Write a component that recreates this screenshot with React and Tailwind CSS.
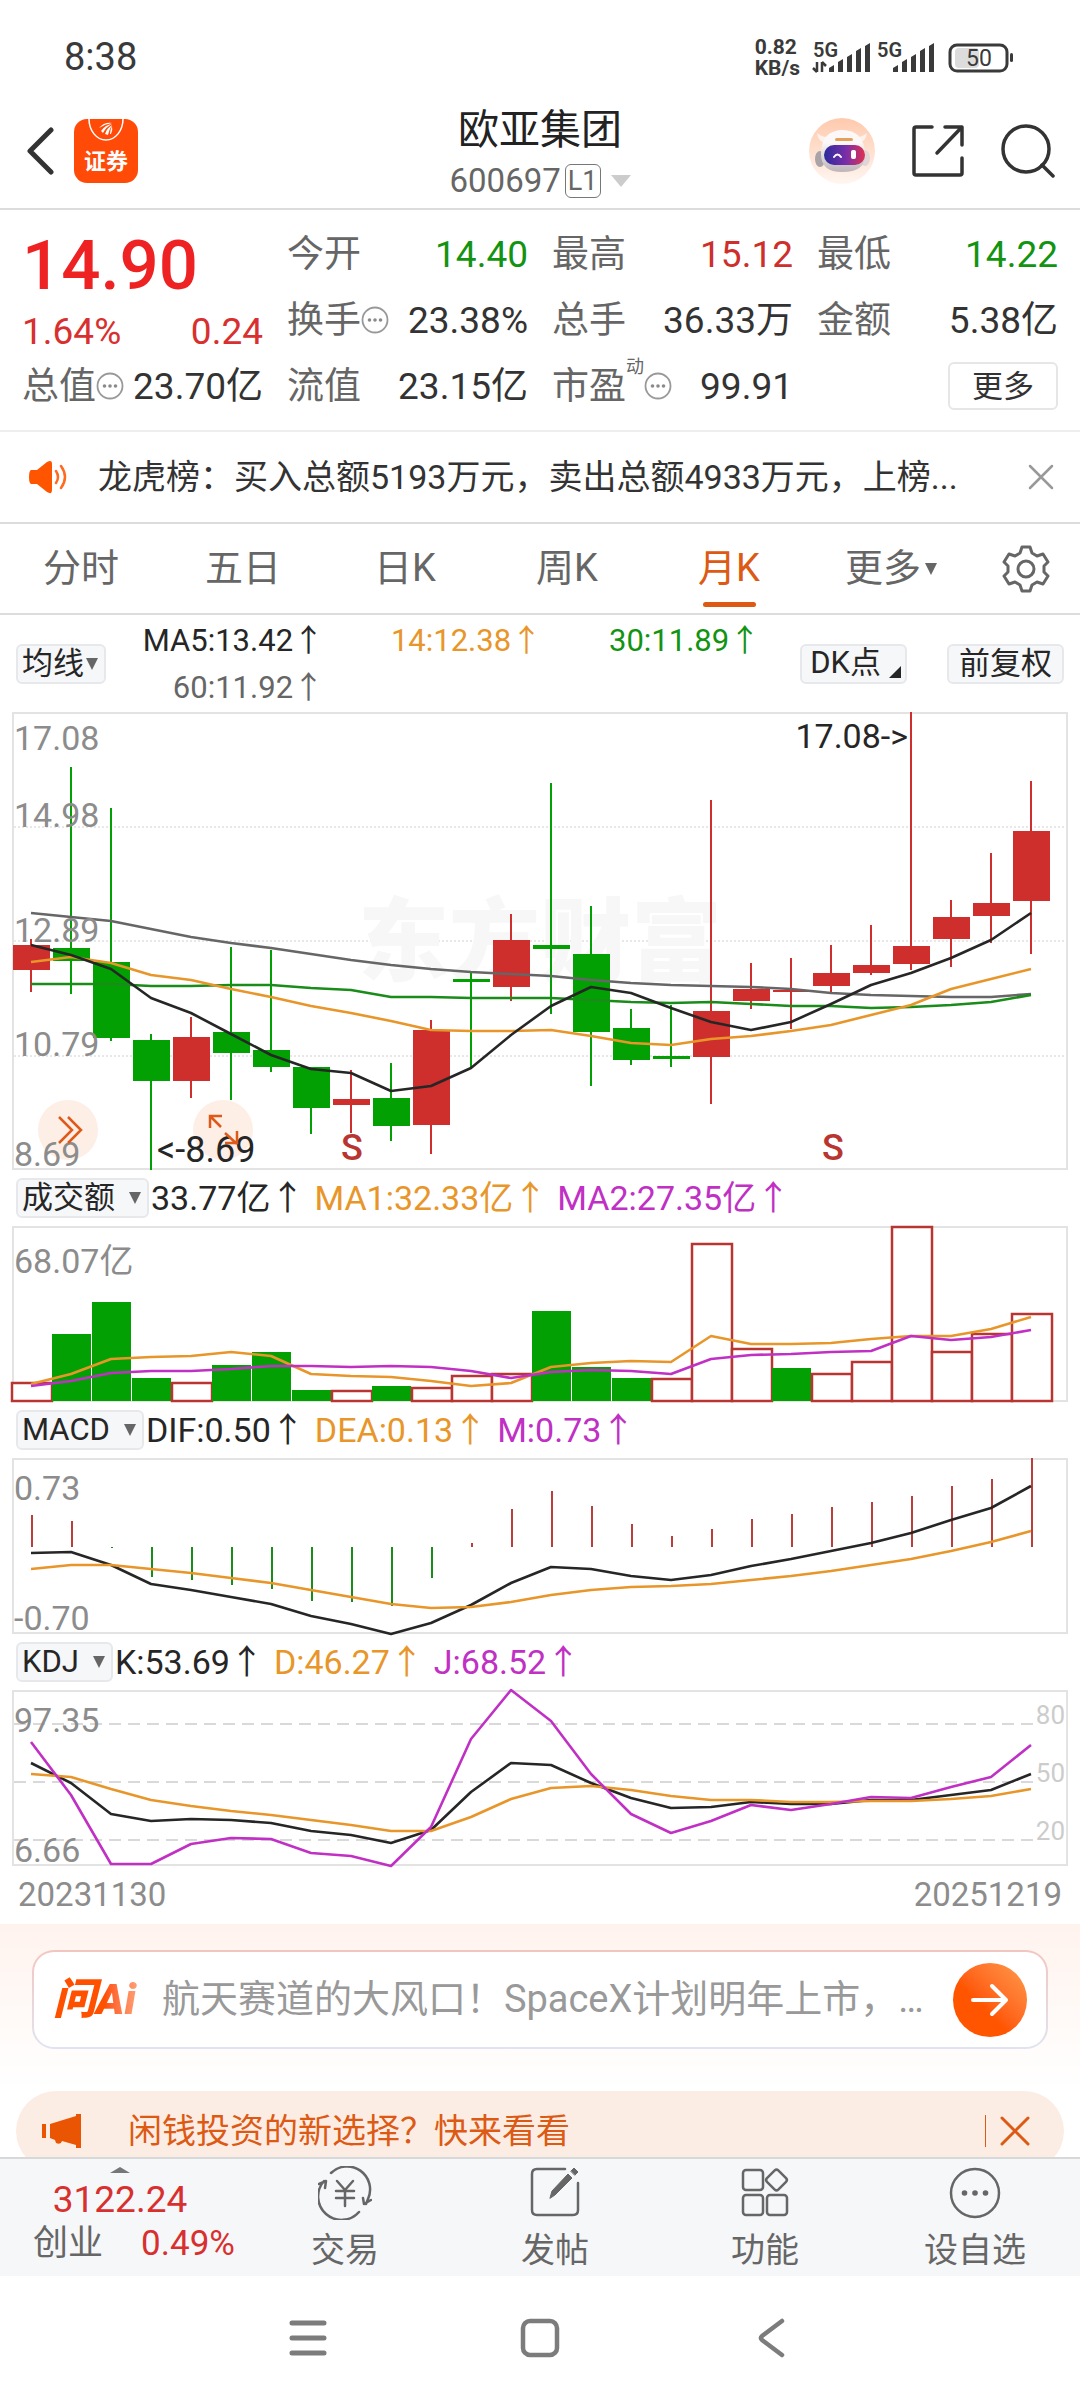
import { useState } from 'react';

const RED = '#ce2e2c';
const GREEN = '#02a002';
const ORANGE = '#e8962a';
const PURPLE = '#c030c4';
const BLACK = '#262626';
const STEP = 40;
const cx = (i) => 19 + STEP * i;
const toPoints = (ys) => ys.map((y, i) => `${cx(i)},${y}`).join(' ');

// [up, high, top, bottom, low]
const candles = [
  [1, 227, 233, 258, 280], [0, 55, 236, 249, 282], [0, 96, 250, 326, 329], [0, 322, 328, 369, 458],
  [1, 305, 325, 369, 386], [0, 235, 320, 341, 388], [0, 238, 338, 355, 360], [0, 355, 355, 396, 422],
  [1, 358, 387, 393, 421], [0, 351, 386, 414, 429], [1, 308, 318, 413, 442], [0, 261, 267, 270, 356],
  [1, 202, 228, 275, 289], [0, 71, 233, 237, 302], [0, 194, 242, 320, 374], [0, 297, 316, 348, 353],
  [0, 293, 344, 347, 355], [1, 88, 299, 345, 392], [1, 251, 277, 289, 297], [1, 246, 278, 280, 317],
  [1, 233, 261, 274, 282], [1, 213, 253, 261, 263], [1, 0, 234, 252, 258], [1, 188, 205, 227, 255],
  [1, 141, 191, 204, 231], [1, 69, 119, 189, 242],
];
const ma5 = [233, 243, 257, 286, 301, 322, 343, 357, 361, 379, 374, 356, 323, 294, 275, 281, 296, 310, 318, 310, 292, 273, 261, 246, 228, 201];
const ma14 = [250, 245, 251, 263, 268, 277, 285, 294, 301, 309, 318, 319, 319, 318, 324, 331, 333, 327, 324, 319, 313, 303, 293, 277, 267, 257];
const ma30 = [272, 272, 272, 274, 274, 273, 273, 276, 278, 285, 285, 286, 286, 286, 288, 290, 291, 290, 292, 294, 294, 296, 295, 293, 290, 283];
const ma60 = [201, 205, 209, 217, 225, 231, 236, 242, 248, 253, 257, 260, 262, 264, 268, 271, 273, 274, 275, 277, 281, 283, 284, 285, 285, 282];

const volumes = [
  [1, 157], [0, 108], [0, 76], [0, 152], [1, 157], [0, 139], [0, 126], [0, 164], [1, 165], [0, 160], [1, 162], [1, 150], [1, 148],
  [0, 85], [0, 141], [0, 152], [1, 153], [1, 18], [1, 123], [0, 142], [1, 148], [1, 136], [1, 1], [1, 126], [1, 108], [1, 88],
];
const volMa1 = [158, 148, 133, 131, 130, 126, 130, 148, 150, 151, 155, 160, 157, 141, 137, 135, 136, 110, 118, 118, 117, 113, 110, 110, 103, 91];
const volMa2 = [160, 155, 147, 145, 145, 143, 140, 140, 141, 140, 141, 145, 152, 146, 144, 145, 148, 133, 129, 128, 126, 125, 110, 114, 111, 104];

const macd = [57, 63, 90, 119, 122, 127, 131, 143, 144, 148, 120, 85, 51, 33, 48, 66, 78, 71, 61, 56, 49, 44, 38, 28, 21, 0];
const dif = [95, 94, 107, 126, 132, 139, 146, 158, 166, 176, 165, 147, 125, 109, 111, 118, 122, 117, 108, 101, 93, 85, 75, 62, 50, 28];
const dea = [111, 107, 107, 111, 115, 120, 125, 132, 139, 146, 150, 149, 144, 137, 132, 129, 128, 126, 122, 118, 113, 107, 101, 93, 84, 73];

const kLine = [73, 93, 124, 131, 129, 130, 133, 141, 145, 153, 140, 102, 73, 75, 93, 108, 118, 117, 112, 114, 114, 110, 110, 105, 100, 84];
const dLine = [84, 87, 99, 110, 116, 121, 125, 130, 135, 141, 141, 127, 109, 98, 96, 100, 106, 110, 110, 112, 112, 111, 111, 109, 106, 99];
const jLine = [52, 105, 174, 174, 154, 148, 149, 163, 166, 176, 137, 49, 0, 31, 84, 124, 143, 131, 115, 120, 114, 107, 108, 97, 87, 55];

function Line({ ys, color }) {
  return <polyline points={toPoints(ys)} fill="none" stroke={color} strokeWidth="2.6" strokeLinejoin="round" />;
}

function Frame({ height, label, children }) {
  return (
    <svg viewBox={`0 0 1056 ${height}`} className="block w-full overflow-visible" role="img" aria-label={label}>
      <rect x="1" y="1" width="1054" height={height - 2} fill="none" stroke="#e3e3e3" strokeWidth="2" />
      {children}
    </svg>
  );
}

function AxisText({ y, children }) {
  return <text x="2" y={y} fontSize="34" fill="#8c8c8c">{children}</text>;
}

function PriceChart() {
  return (
    <Frame height={458} label="月K">
      {[115, 229, 344].map((y) => <line key={y} x1="2" x2="1054" y1={y} y2={y} stroke="#d0d0d0" strokeDasharray="2 2" />)}
      <text x="346" y="262" fontSize="91" fontWeight="900" fill="#f7f7f7">东方财富</text>
      {candles.map(([up, high, top, bottom, low], i) => (
        <g key={i} fill={up ? RED : GREEN}>
          <rect x={cx(i) - 1} y={high} width="2" height={low - high} />
          <rect x={cx(i) - 18} y={top} width="37" height={bottom - top} />
        </g>
      ))}
      <Line ys={ma60} color="#666" />
      <Line ys={ma30} color="#1a8c1a" />
      <Line ys={ma14} color={ORANGE} />
      <Line ys={ma5} color={BLACK} />
      <circle cx="56" cy="418" r="30" fill="#fdeae0" fillOpacity="0.8" />
      <circle cx="211" cy="418" r="30" fill="#fdeae0" fillOpacity="0.8" />
      <AxisText y="38">17.08</AxisText>
      <AxisText y="115">14.98</AxisText>
      <AxisText y="230">12.89</AxisText>
      <AxisText y="344">10.79</AxisText>
      <AxisText y="454">8.69</AxisText>
      <path d="M47 405l13 13-13 13M56 405l13 13-13 13" fill="none" stroke="#de5a1a" strokeWidth="2.5" />
      <text x="145" y="450" fontSize="36" fill={BLACK}>&lt;-8.69</text>
      <path d="M198 416v-12h12M198 404l11 11M213 421l12 11M225 419v12h-12" fill="none" stroke="#de5a1a" strokeWidth="2.5" />
      <text x="896" y="36" fontSize="34" fill={BLACK} textAnchor="end">17.08-&gt;</text>
      <text x="340" y="448" fontSize="36" fontWeight="500" fill="#b93532" textAnchor="middle">S</text>
      <text x="821" y="448" fontSize="36" fontWeight="500" fill="#b93532" textAnchor="middle">S</text>
    </Frame>
  );
}

function VolumeChart() {
  return (
    <Frame height={176} label="成交额">
      {volumes.map(([up, top], i) => up
        ? <rect key={i} x={cx(i) - 19} y={top} width="40" height={175 - top} fill="#fff" stroke="#b93532" strokeWidth="2.5" />
        : <rect key={i} x={cx(i) - 19} y={top} width="39" height={175 - top} fill={GREEN} />)}
      <Line ys={volMa1} color={ORANGE} />
      <Line ys={volMa2} color={PURPLE} />
      <AxisText y="47">68.07亿</AxisText>
    </Frame>
  );
}

function MacdChart() {
  return (
    <Frame height={176} label="MACD">
      {macd.map((y, i) => <line key={i} x1={cx(i) + 1} x2={cx(i) + 1} y1="89" y2={y} stroke={y < 89 ? '#b93f3c' : '#1a8c1a'} strokeWidth="2" />)}
      <Line ys={dif} color={BLACK} />
      <Line ys={dea} color={ORANGE} />
      <AxisText y="42">0.73</AxisText>
      <AxisText y="172">-0.70</AxisText>
    </Frame>
  );
}

function KdjChart() {
  return (
    <Frame height={176} label="KDJ">
      {[[80, 34], [50, 92], [20, 150]].map(([n, y]) => (
        <g key={n}>
          <line x1="2" x2="1022" y1={y} y2={y} stroke="#d9d9d9" strokeWidth="2" strokeDasharray="12 7" />
          <text x="1053" y={y} fontSize="26" fill="#ccc" textAnchor="end">{n}</text>
        </g>
      ))}
      <Line ys={kLine} color={BLACK} />
      <Line ys={dLine} color={ORANGE} />
      <Line ys={jLine} color={PURPLE} />
      <AxisText y="42">97.35</AxisText>
      <AxisText y="172">6.66</AxisText>
    </Frame>
  );
}

function Picker({ label, options, tight }) {
  return (
    <span className="relative inline-flex shrink-0">
      <select aria-label={label} className={`field-sizing-content appearance-none h-10 rounded-md border-2 border-[#e6e8ec] bg-[#f6f7f9] pl-1 text-[31px] leading-9 text-[#262626] outline-none ${tight ? 'pr-5' : 'pr-8'}`}>
        {options.map((o) => <option key={o}>{o}</option>)}
      </select>
      <svg viewBox="0 0 12 12" className="pointer-events-none absolute right-2 top-3.5 size-3" fill="#666"><path d="M0 0h12L6 12z" /></svg>
    </span>
  );
}

function IndicatorBar({ label, options, values }) {
  return (
    <div className="flex h-14 items-center px-4 text-[34px] whitespace-nowrap">
      <Picker label={label} options={options} />
      <div className="flex gap-2.5 pl-0.5">
        {values.map(([text, cls]) => <span key={text} className={cls}>{text}</span>)}
      </div>
    </div>
  );
}

function InfoDots() {
  return (
    <svg viewBox="0 0 28 28" className="size-7 shrink-0" fill="none" stroke="#999" strokeWidth="1.8">
      <circle cx="14" cy="14" r="12.5" />
      <g fill="#8a8a8a" stroke="none"><circle cx="8.5" cy="14" r="1.8" /><circle cx="14" cy="14" r="1.8" /><circle cx="19.5" cy="14" r="1.8" /></g>
    </svg>
  );
}

function Stat({ label, value, color = 'text-[#333]', sup, info }) {
  return (
    <div className="flex h-[66px] items-center">
      <span className="text-[#666]">{label}</span>
      {sup && <span className="self-start text-lg text-[#666]">{sup}</span>}
      {info && <InfoDots />}
      <span className={`ml-auto ${color}`}>{value}</span>
    </div>
  );
}

function Signal({ arrows }) {
  return (
    <svg viewBox="0 0 60 32" className="h-8 w-[60px] overflow-visible" fill="#3a3a3a">
      <text x="1" y="15" fontSize="20" fontWeight="600">5G</text>
      {arrows && <path d="M5 20v10M5 30l-4-4M10 30V20M10 20l4 4" fill="none" stroke="#3a3a3a" strokeWidth="2.5" />}
      <path d="M17 30v-4l5-3v7zM26 30V20l5-3v13zM35 30V15l5-3v18zM44 30V9l5-3v24zM53 30V4l5-3v29z" />
    </svg>
  );
}

function StatusBar() {
  return (
    <div className="flex h-[93px] shrink-0 items-center justify-between pt-[22px] pr-16 pl-16 text-[#3a3a3a]">
      <span className="text-[38px]">8:38</span>
      <div className="flex items-center gap-1">
        <div className="mr-2 text-[21px] leading-[21px] font-bold">
          <div>0.82</div>
          <div>KB/s</div>
        </div>
        <Signal arrows />
        <Signal />
        <svg viewBox="0 0 68 30" className="ml-2 h-[30px] w-[68px]">
          <rect x="7" y="5" width="24" height="20" rx="4" fill="#dcdcdc" />
          <rect x="2" y="2" width="57" height="26" rx="7" fill="none" stroke="#3a3a3a" strokeWidth="3" />
          <rect x="62" y="10" width="3" height="9" rx="1.5" fill="#3a3a3a" />
          <text x="31" y="23" fontSize="23" fill="#3a3a3a" textAnchor="middle">50</text>
        </svg>
      </div>
    </div>
  );
}

function Robot() {
  return (
    <svg viewBox="0 0 66 66" className="size-[66px]">
      <defs>
        <linearGradient id="halo" x1="0" y1="0" x2="0" y2="1"><stop offset="0" stopColor="#ffc9ac" /><stop offset="1" stopColor="#fff6f1" /></linearGradient>
        <linearGradient id="visor" x1="0" y1="0" x2="1" y2="0"><stop offset="0" stopColor="#2b2a9c" /><stop offset="0.55" stopColor="#7b2fa8" /><stop offset="1" stopColor="#e0304f" /></linearGradient>
        <linearGradient id="shell" x1="0" y1="0" x2="0" y2="1"><stop offset="0.3" stopColor="#fcf8f7" /><stop offset="1" stopColor="#bdb5b8" /></linearGradient>
      </defs>
      <circle cx="33" cy="33" r="33" fill="url(#halo)" />
      <path d="M8 15q1 9 10 11l6-8q-9 3-16-3zM58 15q-1 9-10 11l-6-8q9 3 16-3z" fill="#fdf1ec" />
      <ellipse cx="11" cy="41" rx="5" ry="8" fill="#aaa3a8" />
      <ellipse cx="56" cy="40" rx="5" ry="8" fill="#e0d6d8" />
      <path d="M12 36q0-23 21-24 22 0 23 24 1 18-23 18-21 0-21-18z" fill="url(#shell)" />
      <rect x="26" y="20" width="18" height="3" rx="1.5" fill="#e5a05c" />
      <rect x="15" y="27" width="41" height="20" rx="10" fill="url(#visor)" />
      <path d="M25 39q3.5-5 7 0" fill="none" stroke="#fff" strokeWidth="2" strokeLinecap="round" />
      <rect x="42" y="32" width="5" height="9" rx="2" fill="#fff" />
    </svg>
  );
}

function Header() {
  return (
    <header className="grid h-[117px] shrink-0 grid-cols-[1fr_auto_1fr] items-center border-b-2 border-[#dcdcdc]">
      <div className="flex items-center gap-5 pl-[26px]">
        <button type="button" aria-label="返回">
          <svg viewBox="0 0 28 48" className="h-12 w-7" fill="none" stroke="#333" strokeWidth="5" strokeLinecap="round" strokeLinejoin="round"><path d="M25 3L4 24l21 21" /></svg>
        </button>
        <a href="#securities" aria-label="证券">
          <svg viewBox="0 0 64 64" className="size-16">
            <rect width="64" height="64" rx="13" fill="#ff4a08" />
            <path d="M15 0a17 21 0 0 0 34 0" fill="none" stroke="#fff" strokeWidth="1.5" />
            <path d="M25 9q5-6 13-5-7 1-13 5zM27 12q4-6 11-7-6 3-9 9zM31 15q2-6 7-9-3 5-4 10zM36 15q0-4 2-8 1 4-1 8z" fill="#fff" />
            <text x="32" y="50" fontSize="22" fontWeight="700" fill="#fff" textAnchor="middle">证券</text>
          </svg>
        </a>
      </div>
      <div className="pt-1 text-center">
        <h1 className="text-[41px] leading-[56px] text-[#222]">欧亚集团</h1>
        <button type="button" className="flex items-center justify-center text-[33px] leading-[46px] text-[#666]">
          600697
          <span className="ml-1 rounded-md border border-[#777] px-0.5 text-[27px] leading-8">L1</span>
          <svg viewBox="0 0 20 12" className="ml-2.5 h-3 w-5" fill="#ccc"><path d="M0 0h20L10 12z" /></svg>
        </button>
      </div>
      <div className="flex items-center justify-end gap-[37px] pr-[25px]">
        <button type="button" aria-label="智能助手"><Robot /></button>
        <button type="button" aria-label="分享">
          <svg viewBox="0 0 52 52" className="size-[52px]" fill="none" stroke="#333" strokeWidth="3.5" strokeLinecap="round" strokeLinejoin="round">
            <path d="M20 2H4q-2 0-2 2v44q0 2 2 2h44q2 0 2-2V33M33 2h17v18M49 3L25 28" />
          </svg>
        </button>
        <button type="button" aria-label="搜索">
          <svg viewBox="0 0 54 54" className="size-[54px]" fill="none" stroke="#333" strokeWidth="3.5" strokeLinecap="round"><circle cx="25" cy="25" r="23" /><path d="M41 41l11 11" /></svg>
        </button>
      </div>
    </header>
  );
}

function Quote() {
  return (
    <section className="grid grid-cols-4 gap-x-6 border-b-2 border-[#eee] px-[22px] py-[11px] text-[37px] leading-none whitespace-nowrap">
      <div>
        <div className="flex h-[88px] items-center text-[69px] font-medium text-[#ee2222]">14.90</div>
        <div className="flex h-11 items-center justify-between text-[#d8302f]"><span>1.64%</span><span>0.24</span></div>
        <Stat label="总值" value="23.70亿" info />
      </div>
      <div>
        <Stat label="今开" value="14.40" color="text-[#129412]" />
        <Stat label="换手" value="23.38%" info />
        <Stat label="流值" value="23.15亿" />
      </div>
      <div>
        <Stat label="最高" value="15.12" color="text-[#ce2e2c]" />
        <Stat label="总手" value="36.33万" />
        <Stat label="市盈" value="99.91" sup="动" info />
      </div>
      <div>
        <Stat label="最低" value="14.22" color="text-[#129412]" />
        <Stat label="金额" value="5.38亿" />
        <div className="flex h-[66px] items-center justify-end">
          <button type="button" className="h-12 rounded-md border-2 border-[#e6e6e6] px-[22px] text-[31px] leading-none text-[#333]">更多</button>
        </div>
      </div>
    </section>
  );
}

function Notice() {
  return (
    <div className="flex h-[92px] items-center border-b-2 border-[#dcdcdc] pr-[26px] pl-[29px]">
      <svg viewBox="0 0 40 34" className="h-[34px] w-10 shrink-0" fill="#ff5500">
        <path d="M2 10q-2 1-2 7t2 7h6l10 8q5 3 5-2V4q0-5-5-2L8 10z" />
        <path d="M27 11q4 6 0 12M32 6q8 11 0 22" fill="none" stroke="#ff6a20" strokeWidth="2.5" strokeLinecap="round" />
      </svg>
      <a href="#billboard" className="ml-[29px] min-w-0 flex-1 truncate text-[34px] text-[#333]">龙虎榜：买入总额5193万元，卖出总额4933万元，上榜...</a>
      <button type="button" aria-label="关闭公告">
        <svg viewBox="0 0 26 26" className="size-[26px]" stroke="#999" strokeWidth="2.5" strokeLinecap="round"><path d="M2 2l22 22M24 2L2 24" /></svg>
      </button>
    </div>
  );
}

function Tabs() {
  const [active, setActive] = useState('月K');
  return (
    <nav className="flex h-[91px] items-stretch border-b-2 border-[#dcdcdc] text-[38px]">
      {['分时', '五日', '日K', '周K', '月K', '更多'].map((tab) => (
        <button key={tab} type="button" onClick={() => setActive(tab)} className={`relative flex flex-1 items-center justify-center ${tab === active ? 'text-[#dc5a14]' : 'text-[#666]'}`}>
          {tab}
          {tab === '更多' && <svg viewBox="0 0 12 12" className="ml-1 size-3" fill="#666"><path d="M0 0h12L6 12z" /></svg>}
          {tab === active && <span className="absolute bottom-1.5 h-[5px] w-[53px] rounded-full bg-[#dc5a14]" />}
        </button>
      ))}
      <button type="button" aria-label="设置" className="flex w-[108px] items-center justify-center">
        <svg viewBox="0 0 48 48" className="size-12" fill="none" stroke="#666" strokeWidth="3" strokeLinejoin="round">
          <path d="M20 2h8l2 6 5 3 6-2 5 8-4 4v6l4 4-5 8-6-2-5 3-2 6h-8l-2-6-5-3-6 2-5-8 4-4v-6l-4-4 5-8 6 2 5-3z" />
          <circle cx="24" cy="24" r="8" />
        </svg>
      </button>
    </nav>
  );
}

function MaBar() {
  return (
    <div className="flex h-[97px] items-center px-4 whitespace-nowrap text-[#262626]">
      <Picker label="均线" options={['均线']} tight />
      <div className="grid flex-1 grid-cols-3 text-right text-[31px] leading-[47px]">
        <span>MA5:13.42↑</span>
        <span className="text-[#e8962a]">14:12.38↑</span>
        <span className="text-[#129412]">30:11.89↑</span>
        <span className="text-[#666]">60:11.92↑</span>
      </div>
      <button type="button" className="ml-10 flex h-10 items-center rounded-md border-2 border-[#e6e8ec] bg-[#f6f7f9] pr-1 pl-2 text-[31px]">
        DK点
        <svg viewBox="0 0 12 12" className="mt-4 ml-2 size-3" fill="#262626"><path d="M12 0v12H0z" /></svg>
      </button>
      <button type="button" className="ml-10 h-10 rounded-md border-2 border-[#e6e8ec] bg-[#f6f7f9] px-2.5 text-[31px] leading-9">前复权</button>
    </div>
  );
}

function AskAi() {
  return (
    <section className="bg-linear-to-b from-[#fff3ee] to-white px-8 pt-[26px] pb-[42px]">
      <div className="rounded-[22px] bg-linear-to-b from-[#f3c5bf] to-[#dfe4f1] p-0.5">
        <form className="flex h-[95px] items-center rounded-[20px] bg-white px-[19px]" onSubmit={(e) => e.preventDefault()}>
          <label htmlFor="ask" className="bg-linear-to-r from-[#ff5000] from-60% to-[#ffa57a] bg-clip-text pr-1 text-[43px] font-black text-transparent italic">问Ai</label>
          <input id="ask" type="text" placeholder="航天赛道的大风口！SpaceX计划明年上市，…" className="ml-[22px] min-w-0 flex-1 text-[38px] text-[#333] outline-none placeholder:text-[#999]" />
          <button type="submit" aria-label="发送" className="ml-4 flex size-[74px] items-center justify-center rounded-full bg-linear-to-tr from-[#ff5500] from-40% to-[#ff9a4a]">
            <svg viewBox="0 0 38 34" className="h-[34px] w-[38px]" fill="none" stroke="#fff" strokeWidth="4" strokeLinecap="round" strokeLinejoin="round"><path d="M2 17h33M21 3l14 14-14 14" /></svg>
          </button>
        </form>
      </div>
    </section>
  );
}

function Promo() {
  return (
    <div className="mx-4 flex h-20 shrink-0 items-center rounded-full bg-[#fcede4] pr-[34px] pl-[26px] text-[#dc5a14]">
      <svg viewBox="0 0 40 36" className="h-9 w-10" fill="#ea5504"><path d="M0 11h4v14H0zM8 11l26-8V1h5v34h-5v-3l-14-4q-1 4-6 2l-1-3-5-2z" /></svg>
      <a href="#promo" className="ml-[46px] flex-1 text-[34px]">闲钱投资的新选择？快来看看</a>
      <span className="h-8 w-px bg-[#dc5a14]" />
      <button type="button" aria-label="关闭推广" className="ml-3.5">
        <svg viewBox="0 0 30 30" className="size-[30px]" stroke="#dc5a14" strokeWidth="3" strokeLinecap="round"><path d="M2 2l26 26M28 2L2 28" /></svg>
      </button>
    </div>
  );
}

const actions = [
  ['交易', (
    <>
      <path d="M13 7a23 23 0 0 1 37 26l-2 5M46 38l7-4M46 38l-1-6M41 46A23 23 0 0 1 6 15M1 18l7-3-1 7" />
      <path d="M19 15l8 9 8-9M27 24v16M18 25h18M18 32h18" />
    </>
  )],
  ['发帖', (
    <>
      <path d="M37 3H9Q4 3 4 8v36q0 5 5 5h36q5 0 5-5V17" />
      <path d="M22 32l2-7 16-17 4 4-17 17zM43 5l3-3 4 4-3 3z" fill="#666" strokeWidth="1" />
    </>
  )],
  ['功能', (
    <>
      <rect x="5" y="4" width="20" height="20" rx="3" /><rect x="5" y="29" width="20" height="20" rx="3" /><rect x="29" y="29" width="20" height="20" rx="3" />
      <rect x="30.5" y="6" width="16" height="16" rx="2.5" transform="rotate(45 38.5 14)" />
    </>
  )],
  ['设自选', (
    <>
      <circle cx="27" cy="27" r="24" />
      <g fill="#666" stroke="none"><circle cx="16.5" cy="27" r="2.8" /><circle cx="27" cy="27" r="2.8" /><circle cx="37.5" cy="27" r="2.8" /></g>
    </>
  )],
];

function BottomBar() {
  return (
    <nav className="flex h-[119px] shrink-0 border-t-2 border-[#d6d8da] bg-[#f6f7f9]">
      <a href="#index" className="flex w-[240px] flex-col items-center pt-2 text-[#d8302f]">
        <svg viewBox="0 0 20 6" className="h-1.5 w-5" fill="#777"><path d="M0 6L10 0l10 6z" /></svg>
        <span className="mt-1 text-[37px] leading-[46px]">3122.24</span>
        <span className="flex items-center gap-[38px] pl-7 text-[35px] leading-[42px]"><span className="text-[#666]">创业</span>0.49%</span>
      </a>
      {actions.map(([name, icon]) => (
        <a key={name} href={`#${name}`} className="flex flex-1 flex-col items-center pt-[7px] text-[34px] leading-[44px] text-[#666]">
          <svg viewBox="0 0 54 54" className="mb-2 size-[54px]" fill="none" stroke="#666" strokeWidth="2.5" strokeLinecap="round" strokeLinejoin="round">{icon}</svg>
          {name}
        </a>
      ))}
    </nav>
  );
}

function SystemNav() {
  return (
    <div className="flex h-[124px] shrink-0 items-center justify-center gap-48">
      <button type="button" aria-label="最近任务"><svg viewBox="0 0 40 40" className="size-10" stroke="#7c7c7c" strokeWidth="5" strokeLinecap="round"><path d="M4 5h32M4 20h32M4 35h32" /></svg></button>
      <button type="button" aria-label="主屏幕"><svg viewBox="0 0 40 40" className="size-10" fill="none" stroke="#7c7c7c" strokeWidth="4.5"><rect x="3" y="3" width="34" height="34" rx="7" /></svg></button>
      <button type="button" aria-label="后退"><svg viewBox="0 0 40 40" className="size-10" fill="none" stroke="#7c7c7c" strokeWidth="4.5" strokeLinecap="round" strokeLinejoin="round"><path d="M30 3L10 18q-2 2 0 4l20 15" /></svg></button>
    </div>
  );
}

export default function App() {
  return (
    <div className="flex h-screen flex-col bg-white font-[Roboto,'Noto_Sans_CJK_SC',sans-serif]">
      <StatusBar />
      <Header />
      <main className="min-h-0 flex-1 overflow-hidden">
        <Quote />
        <Notice />
        <Tabs />
        <MaBar />
        <div className="px-3"><PriceChart /></div>
        <IndicatorBar label="指标一" options={['成交额']} values={[['33.77亿↑', 'text-[#262626]'], ['MA1:32.33亿↑', 'text-[#e8962a]'], ['MA2:27.35亿↑', 'text-[#c030c4]']]} />
        <div className="px-3"><VolumeChart /></div>
        <IndicatorBar label="指标二" options={['MACD']} values={[['DIF:0.50↑', 'text-[#262626]'], ['DEA:0.13↑', 'text-[#e8962a]'], ['M:0.73↑', 'text-[#c030c4]']]} />
        <div className="px-3"><MacdChart /></div>
        <IndicatorBar label="指标三" options={['KDJ']} values={[['K:53.69↑', 'text-[#262626]'], ['D:46.27↑', 'text-[#e8962a]'], ['J:68.52↑', 'text-[#c030c4]']]} />
        <div className="px-3"><KdjChart /></div>
        <div className="flex h-[58px] items-center justify-between px-[18px] text-[33px] text-[#8c8c8c]">
          <span>20231130</span>
          <span>20251219</span>
        </div>
        <AskAi />
        <Promo />
      </main>
      <BottomBar />
      <SystemNav />
    </div>
  );
}
